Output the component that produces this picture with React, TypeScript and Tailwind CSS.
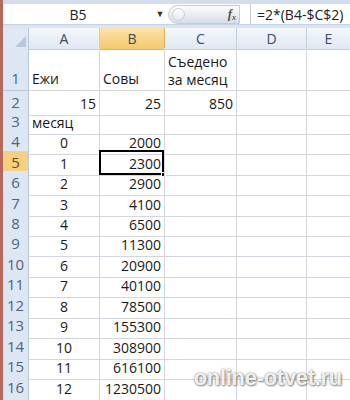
const ROWS: { n: number; h: string; a: string; aAlign: string; b: string; bAlign: string; c?: string }[] = [
  { n: 1, h: 'h-[43px]', a: 'Ежи', aAlign: 'text-left', b: 'Совы', bAlign: 'text-left', c: 'multi' },
  { n: 2, h: 'h-[19px]', a: '15', aAlign: 'text-right', b: '25', bAlign: 'text-right', c: '850' },
  { n: 3, h: 'h-[20px]', a: 'месяц', aAlign: 'text-left', b: '', bAlign: 'text-right' },
  { n: 4, h: 'h-[21px]', a: '0', aAlign: 'text-center', b: '2000', bAlign: 'text-right' },
  { n: 5, h: 'h-[20px]', a: '1', aAlign: 'text-center', b: '2300', bAlign: 'text-right' },
  { n: 6, h: 'h-[21px]', a: '2', aAlign: 'text-center', b: '2900', bAlign: 'text-right' },
  { n: 7, h: 'h-[20px]', a: '3', aAlign: 'text-center', b: '4100', bAlign: 'text-right' },
  { n: 8, h: 'h-[20px]', a: '4', aAlign: 'text-center', b: '6500', bAlign: 'text-right' },
  { n: 9, h: 'h-[21px]', a: '5', aAlign: 'text-center', b: '11300', bAlign: 'text-right' },
  { n: 10, h: 'h-[20px]', a: '6', aAlign: 'text-center', b: '20900', bAlign: 'text-right' },
  { n: 11, h: 'h-[21px]', a: '7', aAlign: 'text-center', b: '40100', bAlign: 'text-right' },
  { n: 12, h: 'h-[20px]', a: '8', aAlign: 'text-center', b: '78500', bAlign: 'text-right' },
  { n: 13, h: 'h-[21px]', a: '9', aAlign: 'text-center', b: '155300', bAlign: 'text-right' },
  { n: 14, h: 'h-[20px]', a: '10', aAlign: 'text-center', b: '308900', bAlign: 'text-right' },
  { n: 15, h: 'h-[21px]', a: '11', aAlign: 'text-center', b: '616100', bAlign: 'text-right' },
  { n: 16, h: 'h-[21px]', a: '12', aAlign: 'text-center', b: '1230500', bAlign: 'text-right' },
];

const COLS = 'grid grid-cols-[26px_71px_65px_72px_70px_1fr]';
const cell = 'border-b border-r border-[#d4d8de] px-[3px] flex items-end pb-[1px] overflow-hidden whitespace-nowrap';

export default function App() {
  return (
    <div className="relative w-[350px] h-[400px] overflow-hidden bg-white flex text-[14px] text-[#1a1a1a]" style={{ fontFamily: '"Open Sans", "Noto Sans", sans-serif' }}>
      <div className="w-[3px] bg-[#b8675c] shrink-0" />
      <div className="flex-1 flex flex-col min-w-0">
        <div className="h-[4px] bg-[#d3deed]" />
        {/* formula bar */}
        <div className="h-[21px] flex items-center bg-white border-b border-[#c5d2e3]">
          <div className="w-[150px] text-center text-[#222]">B5</div>
          <div className="w-[14px] flex justify-center text-[9px] text-[#333]">▼</div>
          <div className="ml-[1px] w-[72px] h-[19px] rounded-l-full rounded-r-[3px] bg-gradient-to-b from-[#fbfcfe] to-[#d7dee8] border border-[#c3ccd8] flex items-center justify-between pl-[3px] pr-[3px]">
            <div className="w-[13px] h-[13px] rounded-full border border-[#c8d0da] bg-gradient-to-b from-white to-[#e2e7ee]" />
            <span className="italic text-[#555] text-[13px] font-semibold" style={{ fontFamily: '"Liberation Serif", serif' }}>f<sub className="text-[8px]">x</sub></span>
          </div>
          <div className="w-[1px] h-full bg-[#c3ccd8] ml-[10px]" />
          <div className="pl-[6px] text-[#222]">=2*(B4-$C$2)</div>
        </div>
        <div className="h-[3px] bg-[#dbe4f1]" />
        {/* column headers */}
        <div className={`${COLS} h-[20px] text-[#3a4a63]`}>
          <div className="bg-[#dfe8f4] border-r border-b border-[#b9c7da] flex items-end justify-end p-[2px]">
            <div className="w-0 h-0 border-l-[11px] border-l-transparent border-b-[11px] border-b-[#b7c8dd]" />
          </div>
          <div className="bg-gradient-to-b from-[#f4f7fb] to-[#e0e8f2] border-r border-b border-[#c4cfdd] flex items-center justify-center">A</div>
          <div className="bg-gradient-to-b from-[#fbe3a8] to-[#f5c86d] border-r border-b border-[#e2b05a] flex items-center justify-center">B</div>
          <div className="bg-gradient-to-b from-[#f4f7fb] to-[#e0e8f2] border-r border-b border-[#c4cfdd] flex items-center justify-center">C</div>
          <div className="bg-gradient-to-b from-[#f4f7fb] to-[#e0e8f2] border-r border-b border-[#c4cfdd] flex items-center justify-center">D</div>
          <div className="bg-gradient-to-b from-[#f4f7fb] to-[#e0e8f2] border-b border-[#c4cfdd] flex items-center justify-center">E</div>
        </div>
        {ROWS.map((r) => (
          <div key={r.n} className={`${COLS} ${r.h}`}>
            <div className={`${r.n === 5 ? 'bg-[#f7cf80] text-[#6b4e1c]' : 'bg-[#dde7f3] text-[#50627e]'} text-[15px] border-r border-b border-[#b9c7da] flex items-end justify-center pb-[1px]`}>{r.n}</div>
            <div className={`${cell} ${r.aAlign === 'text-left' ? 'justify-start' : r.aAlign === 'text-right' ? 'justify-end' : 'justify-center'}`}>{r.a}</div>
            <div className={`${cell} relative overflow-visible ${r.bAlign === 'text-left' ? 'justify-start' : 'justify-end'}`}>
              {r.b}
              {r.n === 5 && (
                <div className="absolute -left-[1px] -top-[1px] -right-[0px] -bottom-[0px] border-2 border-black">
                  <div className="absolute -right-[4px] -bottom-[4px] w-[5px] h-[5px] bg-black border border-white" />
                </div>
              )}
            </div>
            <div className={`${cell} justify-end`}>
              {r.c === 'multi' ? (
                <div className="leading-[18px] text-left w-full">
                  <div>Съедено</div>
                  <div>за месяц</div>
                </div>
              ) : (
                r.c ?? ''
              )}
            </div>
            <div className={cell} />
            <div className="border-b border-[#d4d8de]" />
          </div>
        ))}
      </div>
      <div className="absolute right-[8px] bottom-[6px] text-[22px] font-bold text-white/90 tracking-[-0.3px] [text-shadow:0_0_2px_rgba(0,0,0,0.55),1px_1px_2px_rgba(0,0,0,0.4)]" style={{ fontFamily: '"Liberation Sans", Arial, sans-serif' }}>
        online-otvet.ru
      </div>
    </div>
  );
}
